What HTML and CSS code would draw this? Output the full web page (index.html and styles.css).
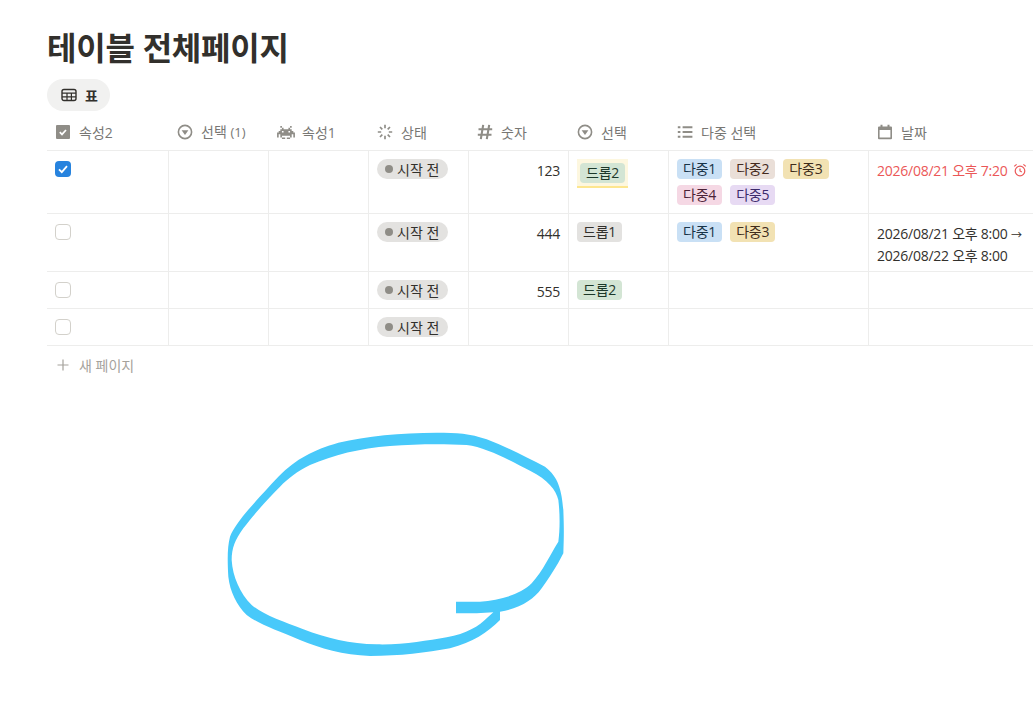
FILE: index.html
```html
<!DOCTYPE html>
<html lang="ko">
<head>
    <meta charset="UTF-8">
    <meta name="viewport" content="width=device-width, initial-scale=1.0">
    <title>테이블 전체페이지</title>
    <link rel="stylesheet" href="styles.css">
</head>
<body>
    <h1 class="title">테이블 전체페이지</h1>

    <div class="tab">
        <svg class="icon" viewBox="0 0 16 16"><rect x="1" y="2.5" width="14" height="11" rx="2" fill="none" stroke="#32302c" stroke-width="1.4"/><path d="M1 6.2h14M1 9.8h14M6 6.2v7.2M10.4 6.2v7.2" stroke="#32302c" stroke-width="1.2" fill="none"/></svg>
        <span>표</span>
    </div>

    <div class="table">
        <div class="row head">
            <div class="cell">
                <svg class="icon" viewBox="0 0 16 16"><rect x="1" y="1" width="14" height="14" rx="1" fill="#8f8d87"/><path d="M4.8 8.2l2.2 2.2 4-4.4" stroke="#fff" stroke-width="1.7" fill="none"/></svg>
                <span>속성2</span>
            </div>
            <div class="cell">
                <svg class="icon" viewBox="0 0 16 16"><circle cx="8" cy="8" r="6.6" fill="none" stroke="#8f8d87" stroke-width="1.6"/><path d="M4.6 6.2h6.8L8 11z" fill="#8f8d87"/></svg>
                <span>선택 <small>(1)</small></span>
            </div>
            <div class="cell">
                <svg class="icon alien" viewBox="0 0 11 8"><path fill="#8f8d87" d="M2 0h1v1H2zM8 0h1v1H8zM3 1h1v1H3zM7 1h1v1H7zM2 2h7v1H2zM1 3h2v1H1zM4 3h3v1H4zM8 3h2v1H8zM0 4h11v1H0zM0 5h1v2H0zM2 5h7v1H2zM10 5h1v2h-1zM2 6h1v1H2zM8 6h1v1H8zM3 7h2v1H3zM6 7h2v1H6z"/></svg>
                <span>속성1</span>
            </div>
            <div class="cell">
                <svg class="icon" viewBox="0 0 16 16"><path d="M8 .8v3.400M8 11.800v3.400M.8 8h3.400M11.800 8h3.400M3 3l2.300 2.300M10.700 10.700L13 13M3 13l2.300-2.300M10.700 5.300L13 3" stroke="#8f8d87" stroke-width="1.700" fill="none"/></svg>
                <span>상태</span>
            </div>
            <div class="cell">
                <svg class="icon" viewBox="0 0 16 16"><path d="M6.200 .8L3.800 15.200M12.200 .8L9.800 15.200M1.500 5.300h13.700M.8 10.700h13.700" stroke="#8f8d87" stroke-width="2.100" fill="none"/></svg>
                <span>숫자</span>
            </div>
            <div class="cell">
                <svg class="icon" viewBox="0 0 16 16"><circle cx="8" cy="8" r="6.6" fill="none" stroke="#8f8d87" stroke-width="1.6"/><path d="M4.6 6.200h6.800L8 11z" fill="#8f8d87"/></svg>
                <span>선택</span>
            </div>
            <div class="cell">
                <svg class="icon" viewBox="0 0 16 16"><path d="M.8 3.200h2.600M.8 8h2.600M.8 12.800h2.600M5.600 3.200h9.800M5.600 8h9.800M5.600 12.800h9.800" stroke="#8f8d87" stroke-width="1.900" fill="none"/></svg>
                <span>다중 선택</span>
            </div>
            <div class="cell">
                <svg class="icon" viewBox="0 0 16 16"><path fill="#8f8d87" fill-rule="evenodd" d="M3.500 .8h2v1.700h5V.8h2v1.700h1.500a1 1 0 0 1 1 1V14.200a1 1 0 0 1-1 1H2a1 1 0 0 1-1-1V3.500a1 1 0 0 1 1-1h1.500zM2.600 6V13.600h10.800V6z"/></svg>
                <span>날짜</span>
            </div>
        </div>

        <div class="row row-1">
            <div class="cell"><span class="check checked"><svg viewBox="0 0 16 16"><path d="M4 8.400l2.800 2.800L12 5.200" stroke="#fff" stroke-width="1.800" fill="none"/></svg></span></div>
            <div class="cell"></div>
            <div class="cell"></div>
            <div class="cell"><span class="status"><i></i>시작 전</span></div>
            <div class="cell num">123</div>
            <div class="cell"><span class="mark"><span class="tag green">드롭2</span></span></div>
            <div class="cell tags">
                <span class="tag blue">다중1</span>
                <span class="tag brown">다중2</span>
                <span class="tag yellow">다중3</span>
                <span class="tag pink">다중4</span>
                <span class="tag purple">다중5</span>
            </div>
            <div class="cell date overdue">2026/08/21 오후 7:20
                <svg class="clock" viewBox="0 0 14 14"><circle cx="7" cy="8" r="4.800" fill="none" stroke="#eb5757" stroke-width="1.200"/><path d="M7 5.400V8l1.800 1M1.200 3.400l2.400-2M12.800 3.400l-2.400-2" stroke="#eb5757" stroke-width="1.200" fill="none"/></svg>
            </div>
        </div>

        <div class="row row-2">
            <div class="cell"><span class="check"></span></div>
            <div class="cell"></div>
            <div class="cell"></div>
            <div class="cell"><span class="status"><i></i>시작 전</span></div>
            <div class="cell num">444</div>
            <div class="cell"><span class="tag gray">드롭1</span></div>
            <div class="cell tags">
                <span class="tag blue">다중1</span>
                <span class="tag yellow">다중3</span>
            </div>
            <div class="cell date">2026/08/21 오후 8:00 <span class="arrow">→</span><br>2026/08/22 오후 8:00</div>
        </div>

        <div class="row">
            <div class="cell"><span class="check"></span></div>
            <div class="cell"></div>
            <div class="cell"></div>
            <div class="cell"><span class="status"><i></i>시작 전</span></div>
            <div class="cell num">555</div>
            <div class="cell"><span class="tag green">드롭2</span></div>
            <div class="cell"></div>
            <div class="cell"></div>
        </div>

        <div class="row">
            <div class="cell"><span class="check"></span></div>
            <div class="cell"></div>
            <div class="cell"></div>
            <div class="cell"><span class="status"><i></i>시작 전</span></div>
            <div class="cell"></div>
            <div class="cell"></div>
            <div class="cell"></div>
            <div class="cell"></div>
        </div>
    </div>

    <div class="new-page">
        <svg class="plus" viewBox="0 0 12 12"><path d="M6 .5v11M.5 6h11" stroke="#a5a29c" stroke-width="1.200" fill="none"/></svg>
        <span>새 페이지</span>
    </div>

    <!-- hand drawn circle on top of the page -->
    <svg class="scribble" viewBox="0 0 1110 750">
        <path fill="#48c9fa" d="M738 545L810 545C870 540 930 525 965 490C1000 450 1020 405 1045 365C1050 330 1050 280 1045 240C1038 210 1015 180 960 152C900 122 830 82 770 75C700 72 620 72 540 78C450 85 370 105 300 135C260 155 235 175 210 200C175 235 130 285 100 325C75 360 65 385 65 420C68 470 90 520 125 555C160 585 220 605 280 628C350 655 420 672 500 673C580 675 650 662 710 652C770 640 805 620 835 590L850 577L870 575L870 600C830 640 790 665 720 685C650 698 570 708 480 708C400 705 330 685 270 660C200 630 150 615 110 585C80 555 60 515 55 470C52 420 52 380 60 350C75 310 130 250 205 170C260 115 310 90 385 68C470 48 570 38 680 38C740 38 780 40 830 58C890 80 950 112 1005 140C1045 170 1055 210 1060 270C1062 320 1062 350 1060 400C1040 440 1020 470 995 505C970 540 930 565 870 575L850 577L800 580L738 580Z"/>
    </svg>
</body>
</html>
```

FILE: styles.css
```css
body {
    margin: 0;
    padding-left: 47px;
    height: 708px;
    overflow: hidden;
    position: relative;
    background-color: white;
    color: #32302c;
    font-family: "Open Sans", "Noto Sans CJK KR", sans-serif;
    font-size: 14px;
}
.title {
    margin: 0;
    padding-top: 28px;
    font-size: 32px;
    line-height: 40px;
    font-weight: 700;
    letter-spacing: -0.25px;
}
.tab {
    display: inline-flex;
    align-items: center;
    gap: 8px;
    margin-top: 11px;
    height: 32px;
    padding: 0 12px 0 14px;
    border-radius: 16px;
    background-color: #f1f1f0;
    font-size: 14px;
    font-weight: 700;
}
.icon {
    width: 16px;
    height: 16px;
    flex: none;
}
.alien {
    width: 18px;
    height: 13px;
    margin-right: -1px;
}
.table {
    margin-top: 5px;
}
.row {
    display: grid;
    grid-template-columns: 122px 100px 100px 100px 100px 100px 200px 1fr;
    height: 36px;
    border-bottom: 1px solid #ededec;
}
.row-1 {
    height: 62px;
}
.row-2 {
    height: 57px;
}
.row.head {
    height: 34px;
    color: #787774;
}
.head .cell {
    display: flex;
    align-items: center;
    gap: 8px;
    padding: 0 8px 2px;
    border-right: none;
}
.head small {
    font-size: 13px;
}
.cell {
    padding: 8px;
    line-height: 21px;
    border-right: 1px solid #ededec;
    min-width: 0;
}
.cell:last-child {
    border-right: none;
}
.check {
    display: block;
    width: 16px;
    height: 16px;
    margin-top: 2px;
    box-sizing: border-box;
    border: 1px solid #d3d1cb;
    border-radius: 4px;
}
.check svg {
    display: block;
}
.checked {
    border: none;
    background-color: #2783de;
}
.status {
    display: flex;
    width: fit-content;
    align-items: center;
    gap: 4px;
    height: 20px;
    padding: 0 9px 0 8px;
    border-radius: 10px;
    background-color: #e3e2e0;
}
.status i {
    width: 8px;
    height: 8px;
    border-radius: 50%;
    background-color: #8f8d87;
}
.num {
    text-align: right;
    padding-top: 9px;
    letter-spacing: -0.25px;
}
.tag {
    display: block;
    width: fit-content;
    height: 20px;
    line-height: 20px;
    padding: 0 6px;
    border-radius: 4px;
    letter-spacing: -0.2px;
}
.tags {
    display: flex;
    flex-wrap: wrap;
    align-content: flex-start;
    gap: 6px 8px;
}
.mark {
    display: block;
    width: fit-content;
    padding: 4px 3px 3px;
    background-color: #fdf7df;
    border-bottom: 2px solid #fde68f;
}
.gray { background-color: #e3e2e0; }
.green { background-color: #d3e5d4; color: #1c3829; }
.blue { background-color: #c9e0f5; color: #183347; }
.brown { background-color: #eadfd8; color: #442a1e; }
.yellow { background-color: #f2e2b3; color: #402c1b; }
.pink { background-color: #f5d8e4; color: #4c2337; }
.purple { background-color: #e7daf3; color: #3c2a6b; }
.date {
    padding-top: 9px;
    white-space: nowrap;
    letter-spacing: -0.25px;
}
.arrow {
    font-size: 11px;
}
.overdue {
    color: #eb5757;
}
.clock {
    width: 14px;
    height: 14px;
    margin-left: 2px;
    vertical-align: -1px;
}
.new-page {
    display: flex;
    align-items: center;
    gap: 10px;
    height: 38px;
    padding-left: 10px;
    color: #a5a29c;
}
.plus {
    width: 12px;
    height: 12px;
}
.scribble {
    position: absolute;
    left: 210px;
    top: 420px;
    width: 370px;
    height: 250px;
}
```
